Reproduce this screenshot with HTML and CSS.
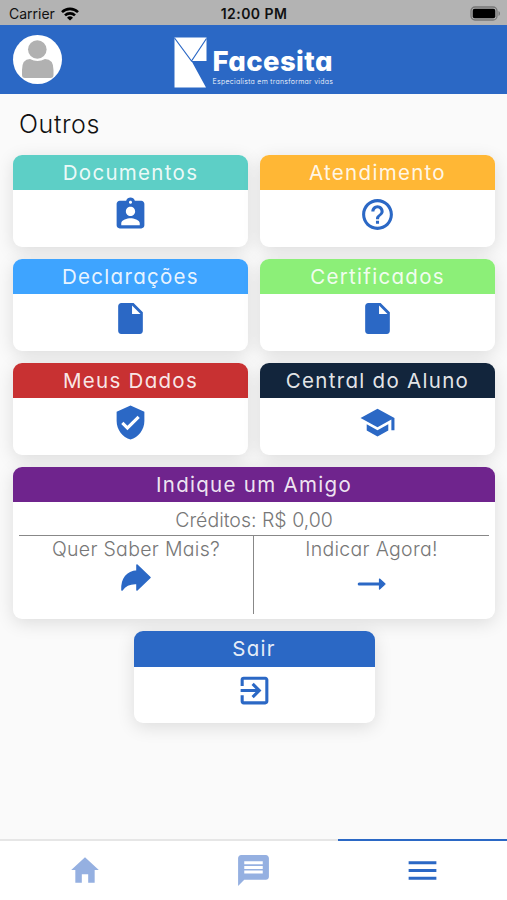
FILE: index.html
```html
<!DOCTYPE html>
<html lang="pt-BR">
  <head>
    <meta charset="UTF-8" />
    <meta name="viewport" content="width=device-width, initial-scale=1.0" />
    <title>Facesita - Outros</title>
    <link rel="stylesheet" href="styles.css">
  </head>
  <body>
    <div class="status-bar">
      <div class="carrier">
        <span>Carrier</span>
        <svg width="18" height="14" viewBox="0 0 18 14" fill="none" stroke="#000" stroke-width="2.6">
          <path d="M1 5.1a11.5 11.5 0 0 1 16 0M4 8.4a7.2 7.2 0 0 1 10 0" />
          <path d="M9 13.6L6 10.7a4.3 4.3 0 0 1 6 0z" fill="#000" stroke="none" />
        </svg>
      </div>
      <div class="clock">12:00 PM</div>
      <svg class="battery" width="31" height="15" viewBox="0 0 31 15">
        <rect x="1" y="1" width="26" height="13" rx="4" fill="none" stroke="#777" stroke-width="1.3" />
        <rect x="2.7" y="2.8" width="22.6" height="9.4" rx="2" fill="#000" />
        <path d="M28.5 5v5c2-.8 2-4.2 0-5z" fill="#777" />
      </svg>
    </div>

    <header class="header">
      <div class="avatar">
        <svg width="49" height="49" viewBox="0 0 49 49" fill="#b1b1b1">
          <circle cx="24.3" cy="14.5" r="9.3" />
          <path d="M9 40V35Q9 24 17 24q7.500 4 15 0 8.500 0 8.500 11v5q0 3-3 3H12q-3 0-3-3z" />
        </svg>
      </div>
      <div class="logo">
        <svg width="33" height="51" viewBox="0 0 33 51">
          <path d="M0.5 0.5H32.500V24H17.500L32 50.500H0.500z" fill="#fff" />
          <path d="M0.5 1L17.500 24L32.500 1.500" fill="none" stroke="#2b68c5" stroke-width="1.2" />
        </svg>
        <div class="logo-text">
          <span class="logo-name">Facesita</span>
          <span class="logo-tagline">Especialista em transformar vidas</span>
        </div>
      </div>
    </header>

    <main class="content">
      <h1>Outros</h1>

      <div class="cards">
        <div class="card">
          <h2 class="teal">Documentos</h2>
          <svg class="icon" viewBox="0 0 24 24"><path d="M19 3h-4.180C14.400 1.840 13.300 1 12 1s-2.400.840-2.820 2H5c-1.100 0-2 .9-2 2v14c0 1.100.9 2 2 2h14c1.100 0 2-.9 2-2V5c0-1.100-.9-2-2-2zm-7 0c.55 0 1 .45 1 1s-.45 1-1 1-1-.45-1-1 .45-1 1-1zm0 4c1.660 0 3 1.340 3 3s-1.340 3-3 3-3-1.340-3-3 1.340-3 3-3zm6 12H6v-1.400c0-2 4-3.100 6-3.100s6 1.100 6 3.100V19z" /></svg>
        </div>
        <div class="card">
          <h2 class="orange">Atendimento</h2>
          <svg class="icon" viewBox="0 0 24 24"><path d="M11 18h2v-2h-2v2zm1-16C6.480 2 2 6.480 2 12s4.480 10 10 10 10-4.480 10-10S17.520 2 12 2zm0 18c-4.410 0-8-3.590-8-8s3.590-8 8-8 8 3.590 8 8-3.590 8-8 8zm0-14c-2.210 0-4 1.790-4 4h2c0-1.100.9-2 2-2s2 .9 2 2c0 2-3 1.750-3 5h2c0-2.250 3-2.500 3-5 0-2.210-1.790-4-4-4z" /></svg>
        </div>
        <div class="card">
          <h2 class="blue">Declarações</h2>
          <svg class="icon" viewBox="0 0 24 24"><path d="M13 9V3.500L18.500 9M6 2C4.890 2 4 2.890 4 4v16a2 2 0 0 0 2 2h12a2 2 0 0 0 2-2V8l-6-6H6z" /></svg>
        </div>
        <div class="card">
          <h2 class="green">Certificados</h2>
          <svg class="icon" viewBox="0 0 24 24"><path d="M13 9V3.500L18.500 9M6 2C4.890 2 4 2.890 4 4v16a2 2 0 0 0 2 2h12a2 2 0 0 0 2-2V8l-6-6H6z" /></svg>
        </div>
        <div class="card">
          <h2 class="red">Meus Dados</h2>
          <svg class="icon" viewBox="0 0 24 24"><path d="M12 1L3 5v6c0 5.550 3.840 10.740 9 12 5.160-1.260 9-6.450 9-12V5l-9-4zm-2 16l-4-4 1.410-1.410L10 14.170l6.590-6.590L18 9l-8 8z" /></svg>
        </div>
        <div class="card">
          <h2 class="navy">Central do Aluno</h2>
          <svg class="icon" viewBox="0 0 24 24"><path d="M5 13.180v4L12 21l7-3.820v-4L12 17l-7-3.820zM12 3L1 9l11 6 9-4.910V17h2V9L12 3z" /></svg>
        </div>

        <div class="card card-wide">
          <h2 class="purple">Indique um Amigo</h2>
          <div class="referral">
            <p class="credits">Créditos: R$ 0,00</p>
            <div class="referral-actions">
              <div class="action">
                <p>Quer Saber Mais?</p>
                <svg width="32" height="30" viewBox="0 0 32 30"><path d="M17 2L30 14.500L17 27V20.500C10 20 5 22.500 2 27C1.500 16 7 8.500 17 8z" stroke-width="1.6" stroke-linejoin="round" /></svg>
              </div>
              <div class="action">
                <p>Indicar Agora!</p>
                <svg class="arrow" width="30" height="14" viewBox="0 0 30 14"><path d="M2.200 7H22" stroke-width="3" stroke-linecap="round" /><path d="M22.500 2L28 7L22.500 12z" stroke-width="1.2" stroke-linejoin="round" /></svg>
              </div>
            </div>
          </div>
        </div>
      </div>

      <div class="card card-exit">
        <h2 class="primary">Sair</h2>
        <svg class="icon" viewBox="0 0 24 24"><path d="M10.090 15.590L11.500 17l5-5-5-5-1.410 1.410L12.670 11H3v2h9.670l-2.580 2.590zM19 3H5a2 2 0 0 0-2 2v4h2V5h14v14H5v-4H3v4a2 2 0 0 0 2 2h14c1.100 0 2-.9 2-2V5c0-1.100-.9-2-2-2z" /></svg>
      </div>
    </main>

    <nav class="tabs">
      <a class="tab">
        <svg width="34" height="34" viewBox="0 0 512 512"><path d="M208 448V320h96v128h97.600V256H464L256 64 48 256h62.400v192z" /></svg>
      </a>
      <a class="tab">
        <svg width="37" height="37" viewBox="0 0 24 24"><path d="M20 2H4c-1.100 0-2 .9-2 2v18l4-4h14c1.100 0 2-.9 2-2V4c0-1.100-.9-2-2-2zm-2 12H6v-2h12v2zm0-3H6V9h12v2zm0-3H6V6h12v2z" /></svg>
      </a>
      <a class="tab active">
        <svg width="37" height="37" viewBox="0 0 24 24"><path d="M3 18h18v-2H3v2zm0-5h18v-2H3v2zm0-7v2h18V6H3z" /></svg>
      </a>
    </nav>
  </body>
</html>
```

FILE: styles.css
```css
* {
  box-sizing: border-box;
}

body {
  margin: 0;
  height: 900px;
  display: flex;
  flex-direction: column;
  background: #fafafa;
  font-family: "Inter", sans-serif;
  font-feature-settings: "cv11";
  overflow: hidden;
}

h1,
h2,
p {
  margin: 0;
}

svg {
  display: block;
  flex-shrink: 0;
}

.status-bar {
  height: 25px;
  padding: 2px 6px 0 9px;
  display: grid;
  grid-template-columns: 1fr auto 1fr;
  align-items: center;
  background: #b3b3b3;
  color: #111;
  font-size: 14px;
  font-feature-settings: normal;
}

.carrier {
  display: flex;
  align-items: center;
  gap: 6px;
}

.clock {
  padding-right: 2px;
  font-weight: 600;
  letter-spacing: 0.45px;
}

.battery {
  justify-self: end;
}

.header {
  height: 69px;
  padding: 0 13px;
  display: grid;
  grid-template-columns: 49px 1fr 49px;
  align-items: center;
  background: #2b68c5;
}

.avatar {
  width: 49px;
  height: 49px;
  border-radius: 50%;
  background: #fff;
  overflow: hidden;
}

.logo {
  display: flex;
  justify-content: center;
  gap: 6px;
  padding-top: 5px;
  color: #fff;
}

.logo-text {
  width: 121px;
  padding-top: 7px;
  display: flex;
  flex-direction: column;
  white-space: nowrap;
}

.logo-name {
  font-size: 27.5px;
  line-height: 35px;
  font-weight: 800;
  letter-spacing: 0.4px;
}

.logo-tagline {
  margin-top: -1px;
  font-size: 7px;
  line-height: 8px;
  font-weight: 300;
  letter-spacing: 0.3px;
}

.content {
  flex: 1;
  padding: 0 12px 0 13px;
}

h1 {
  padding: 14px 0 0 6px;
  height: 60.5px;
  font-size: 25px;
  line-height: 32px;
  font-weight: 300;
  letter-spacing: 0.6px;
  color: #111;
}

.cards {
  display: grid;
  grid-template-columns: 1fr 1fr;
  gap: 12px;
}

.card {
  height: 92px;
  display: flex;
  flex-direction: column;
  align-items: center;
  background: #fff;
  border-radius: 9px;
  box-shadow: 0 4px 18px rgba(0, 0, 0, 0.12);
}

.card h2 {
  width: 100%;
  height: 35.5px;
  border-radius: 9px 9px 0 0;
  color: rgba(255, 255, 255, 0.9);
  font-size: 20.5px;
  line-height: 35px;
  font-weight: 400;
  text-align: center;
  letter-spacing: 1.3px;
}

.teal { background: #5dcfc6; }
.orange { background: #ffb735; }
.blue { background: #3ea4ff; }
.green { background: #8cef78; }
.red { background: #c83132; }
.navy { background: #12253c; }
.purple { background: #6f248d; }
.primary { background: #2b68c5; }

.icon {
  width: 37px;
  height: 37px;
  margin-top: 5.5px;
  fill: #2b68c5;
}

.card-wide {
  grid-column: span 2;
  height: 152.5px;
}

.referral {
  width: 100%;
  padding: 0 6px;
  color: #777;
  font-size: 19.5px;
  font-weight: 300;
  text-align: center;
}

.credits {
  height: 33.5px;
  line-height: 37px;
  border-bottom: 1px solid #888;
}

.referral-actions {
  display: grid;
  grid-template-columns: 1fr 1fr;
  height: 78px;
}

.action {
  display: flex;
  flex-direction: column;
  align-items: center;
  line-height: 27px;
  letter-spacing: 0.3px;
}

.action:first-child {
  border-right: 1px solid #888;
}

.action svg {
  fill: #2b68c5;
  stroke: #2b68c5;
}

.action .arrow {
  margin-top: 14px;
}

.card-exit {
  width: 241px;
  margin: 12px auto 0;
}

.tabs {
  height: 61px;
  display: grid;
  grid-template-columns: repeat(3, 1fr);
  background: #fff;
}

.tab {
  display: flex;
  justify-content: center;
  align-items: center;
  padding-bottom: 1px;
  border-top: 2px solid #e6e6e6;
  fill: #95b0e1;
}

.tab.active {
  border-top-color: #2b68c5;
  fill: #2b68c5;
}
```
